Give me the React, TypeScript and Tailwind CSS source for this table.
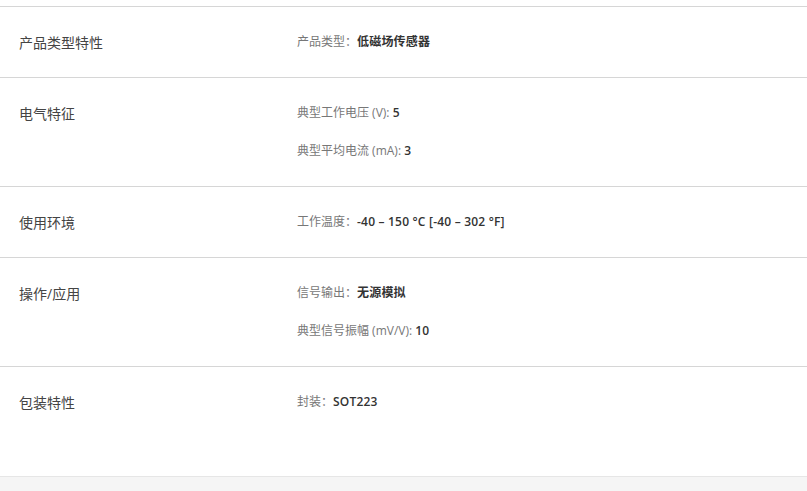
const font = "font-['Open_Sans','Noto_Sans_CJK_SC',sans-serif]";

type Spec = { k: string; v: string };
type Group = { title: string; specs: Spec[] };

const groups: Group[] = [
  { title: "产品类型特性", specs: [{ k: "产品类型：", v: "低磁场传感器" }] },
  {
    title: "电气特征",
    specs: [
      { k: "典型工作电压 (V): ", v: "5" },
      { k: "典型平均电流 (mA): ", v: "3" },
    ],
  },
  { title: "使用环境", specs: [{ k: "工作温度：", v: "-40 – 150 °C [-40 – 302 °F]" }] },
  {
    title: "操作/应用",
    specs: [
      { k: "信号输出：", v: "无源模拟" },
      { k: "典型信号振幅 (mV/V): ", v: "10" },
    ],
  },
  { title: "包装特性", specs: [{ k: "封装：", v: "SOT223" }] },
];

function SpecRow({ group, last }: { group: Group; last: boolean }) {
  return (
    <div
      className={[
        "flex border-t border-[#d6d6d6] px-[19px] pt-4",
        last ? "pb-[55px]" : "pb-4",
      ].join(" ")}
    >
      {/* Group title */}
      <div className="flex h-[38px] w-[278px] shrink-0 items-center text-[14px] text-[#444]">
        {group.title}
      </div>

      {/* Spec list */}
      <div className="flex flex-col">
        {group.specs.map((s) => (
          <div key={s.k} className="flex h-[38px] items-center whitespace-pre text-[12px]">
            <span className="text-[#777]">{s.k}</span>
            <span className="font-semibold tracking-[0.2px] text-[#333]">{s.v}</span>
          </div>
        ))}
      </div>
    </div>
  );
}

export default function App() {
  return (
    <div className={`${font} flex min-h-[491px] flex-col bg-white pt-[6px]`}>
      <div className="flex flex-col">
        {groups.map((g, i) => (
          <SpecRow key={g.title} group={g} last={i === groups.length - 1} />
        ))}
      </div>
      <div className="flex-1 border-t border-[#e6e6e6] bg-[#f5f5f5]" />
    </div>
  );
}
